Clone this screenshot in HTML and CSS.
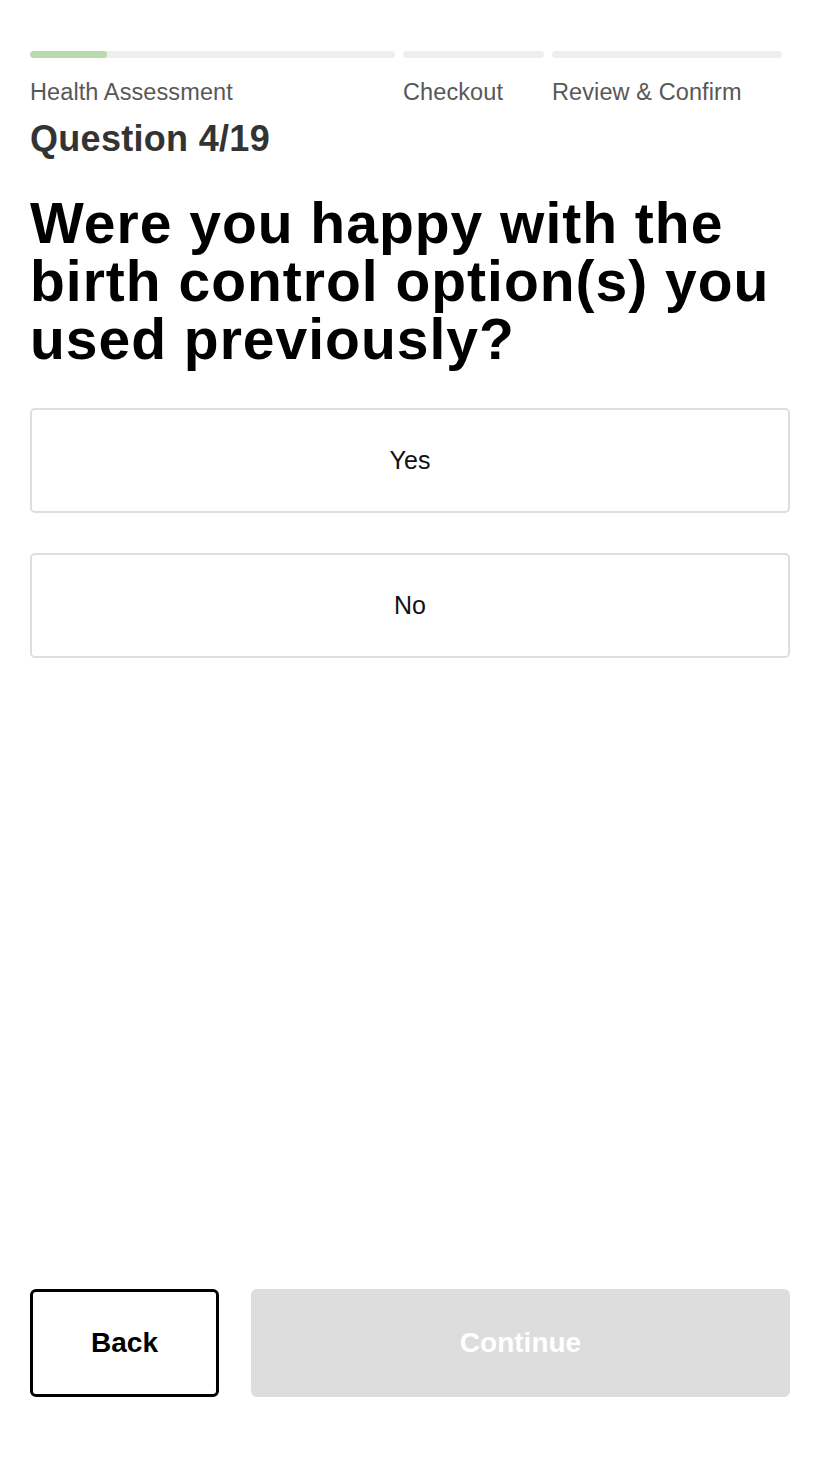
FILE: index.html
```html
<!DOCTYPE html>
<html lang="en">
<head>
<meta charset="utf-8">
<title>Health Assessment</title>
<link rel="stylesheet" href="styles.css">
</head>
<body>
<div class="page">
  <div class="progress">
    <div class="step">
      <div class="track"><div class="fill" style="width:21%"></div></div>
      <div class="step-label">Health Assessment</div>
    </div>
    <div class="step">
      <div class="track"></div>
      <div class="step-label">Checkout</div>
    </div>
    <div class="step">
      <div class="track"></div>
      <div class="step-label">Review &amp; Confirm</div>
    </div>
  </div>
  <div class="counter">Question 4/19</div>
  <h1 class="question">Were you happy with the birth control option(s) you used previously?</h1>
  <div class="options">
    <button class="option">Yes</button>
    <button class="option">No</button>
  </div>
  <div class="spacer"></div>
  <div class="actions">
    <button class="btn-back">Back</button>
    <button class="btn-continue" disabled>Continue</button>
  </div>
</div>
</body>
</html>
```
FILE: styles.css
```css
* { box-sizing: border-box; }
html, body { margin: 0; padding: 0; background: #fff; }
body {
  font-family: "Liberation Sans", Arial, sans-serif;
  color: #000;
}
.page {
  width: 820px;
  height: 1458px;
  padding: 51px 30px 61px 30px;
  display: flex;
  flex-direction: column;
}
.progress {
  display: grid;
  grid-template-columns: 365px 141px 230px;
  column-gap: 8px;
}
.track {
  height: 7px;
  border-radius: 4px;
  background: #eeeeee;
  overflow: hidden;
}
.fill {
  height: 100%;
  background: #b9d9ae;
  border-radius: 4px;
}
.step-label {
  margin-top: 20px;
  font-size: 23.5px;
  line-height: 28px;
  color: #585858;
  letter-spacing: 0.1px;
}
.counter {
  margin-top: 13px;
  font-size: 36px;
  line-height: 40px;
  font-weight: 700;
  color: #333;
  letter-spacing: 0.3px;
}
.question {
  margin: 35px 0 0 0;
  font-size: 57px;
  line-height: 58px;
  font-weight: 700;
  color: #000;
  letter-spacing: 1px;
}
.options {
  margin-top: 40px;
  display: flex;
  flex-direction: column;
  gap: 40px;
}
.option {
  height: 105px;
  border: 2px solid #dedede;
  border-radius: 5px;
  background: #fff;
  font-family: inherit;
  font-size: 25px;
  color: #111;
  padding: 0;
}
.spacer { flex: 1; }
.actions {
  display: flex;
  gap: 32px;
}
.btn-back {
  width: 189px;
  height: 108px;
  border: 3px solid #000;
  border-radius: 6px;
  background: #fff;
  font-family: inherit;
  font-size: 28px;
  font-weight: 700;
  color: #000;
}
.btn-continue {
  flex: 1;
  height: 108px;
  border: none;
  border-radius: 6px;
  background: #dddddd;
  font-family: inherit;
  font-size: 28px;
  font-weight: 700;
  color: #fff;
}
```
